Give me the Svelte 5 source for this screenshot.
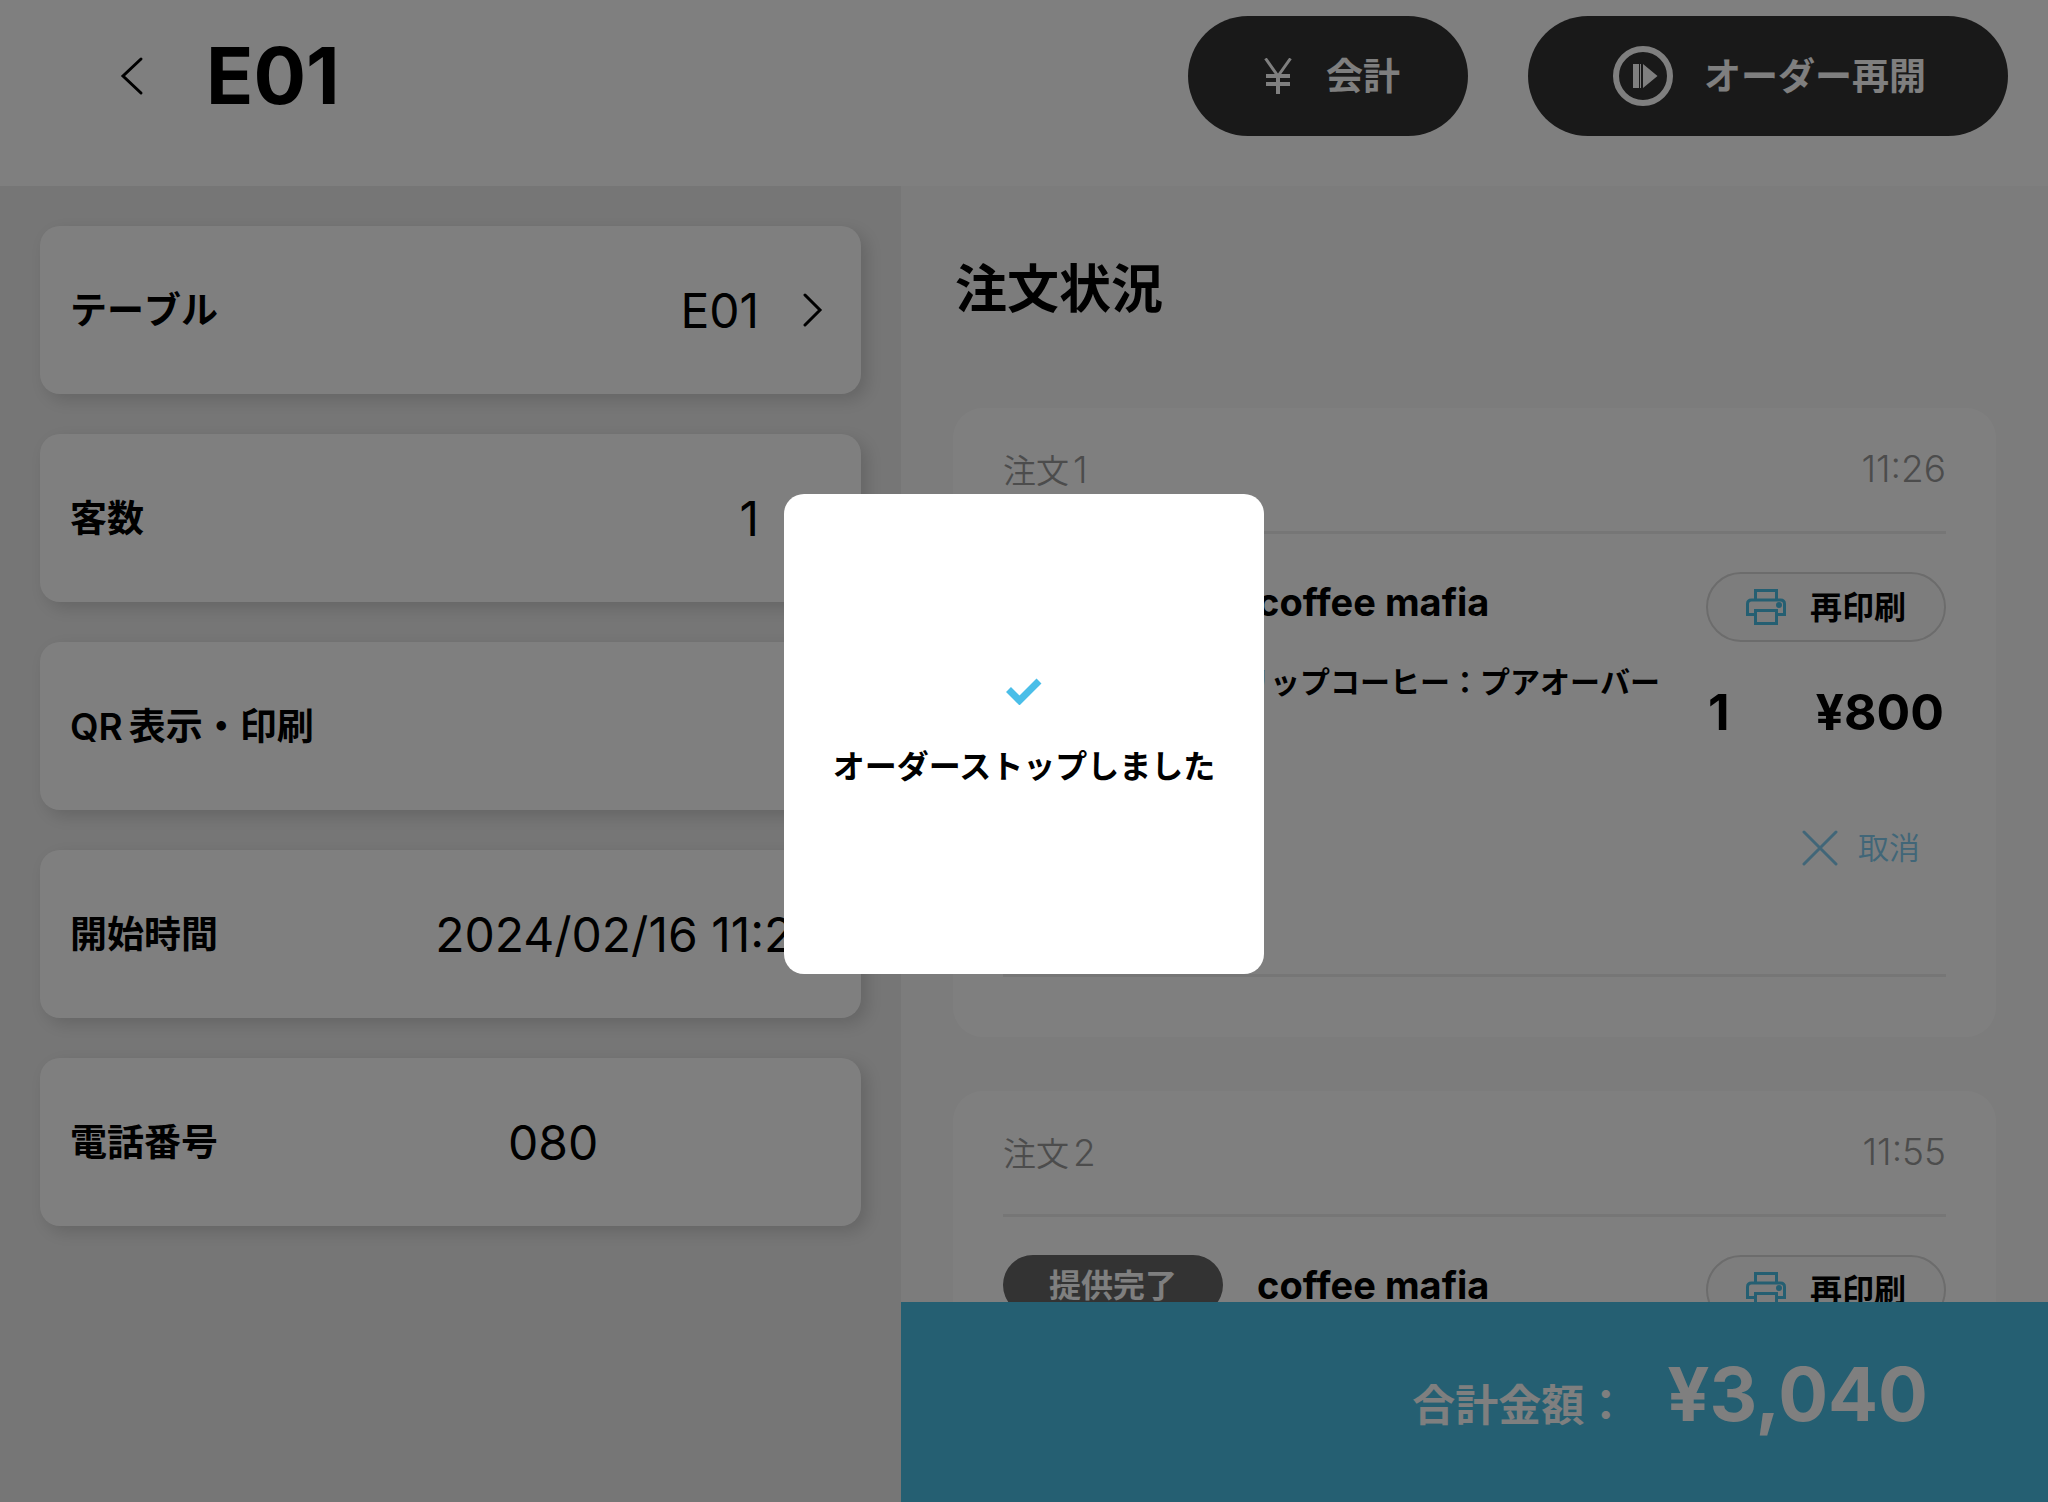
<script>
  const orders = [
    { id: 1, time: '11:26', items: [{ name: 'coffee mafia', option: 'ハンドドリップコーヒー：プアオーバー', qty: 1, price: '¥800' }] },
    { id: 2, time: '11:55', items: [{ name: 'coffee mafia', option: 'ハンドドリップコーヒー：プアオーバー', qty: 1, price: '¥800' }] }
  ];
</script>

{#snippet chevron()}
  <svg class="chevron" viewBox="0 0 20 36" aria-hidden="true"><path d="M2 3l15 15L2 33" /></svg>
{/snippet}

<div class="app">
  <header class="topbar">
    <button class="back" aria-label="戻る">
      <svg viewBox="0 0 24 40" aria-hidden="true"><path d="M21 3L3 20l18 17" /></svg>
    </button>
    <h1>E01</h1>
    <div class="actions">
      <button class="action pay">
        <svg class="yen" viewBox="0 0 28 36" aria-hidden="true"><path class="arms" d="M1.500 0.500L14 18L26.500 0.500" /><path d="M14 16v20M2 18h24M2 26h24" /></svg>
        <span class="text">会計</span>
      </button>
      <button class="action resume">
        <svg class="play" viewBox="0 0 60 60" aria-hidden="true">
          <circle cx="30" cy="30" r="27" />
          <path d="M20 18h6v24h-6zM27 18h1v24h-1zM30 18l14.500 12L30 42z" />
        </svg>
        <span class="text">オーダー再開</span>
      </button>
    </div>
  </header>

  <main>
    <section class="info">
      <button class="row"><span class="label">テーブル</span><span class="value">E01</span>{@render chevron()}</button>
      <button class="row"><span class="label">客数</span><span class="value">1</span>{@render chevron()}</button>
      <button class="row"><span class="label"><span class="latin">QR</span>表示・印刷</span><span class="value"></span>{@render chevron()}</button>
      <div class="row"><span class="label">開始時間</span><time class="value">2024/02/16 11:26</time></div>
      <div class="row">
        <label class="label" for="phone">電話番号</label>
        <input id="phone" type="tel" value="080" />
      </div>
    </section>

    <section class="status">
      <div class="list">
        <h2>注文状況</h2>
        {#each orders as order (order.id)}
          <article class="order">
            <div class="order-head"><span><span class="word">注文</span>{order.id}</span><time>{order.time}</time></div>
            {#each order.items as item}
              <div class="item">
                <div class="main">
                  <div class="title"><span class="badge"><span class="text">提供完了</span></span><h3>{item.name}</h3></div>
                  <p class="option">{item.option}</p>
                </div>
                <div class="side">
                  <button class="reprint">
                    <svg viewBox="0 0 40 36" aria-hidden="true">
                      <path d="M9.500 11V1.500h21V11M9.500 25.500h-8V15q0-4 4-4h29q4 0 4 4v10.500h-8M9.500 21.500h21v13h-21z" />
                      <circle cx="33" cy="16" r="1.500" />
                    </svg>
                    <span class="text">再印刷</span>
                  </button>
                  <div class="amount"><span>{item.qty}</span><span>{item.price}</span></div>
                  <button class="cancel">
                    <svg viewBox="0 0 36 36" aria-hidden="true"><path d="M2 2l32 32M34 2L2 34" /></svg>
                    取消
                  </button>
                </div>
              </div>
            {/each}
          </article>
        {/each}
      </div>
      <footer class="total"><span class="caption">合計金額：</span><strong>¥3,040</strong></footer>
    </section>
  </main>
</div>

<div class="overlay">
  <div class="dialog" role="alertdialog" aria-labelledby="dialog-text">
    <svg viewBox="0 0 36 27" aria-hidden="true"><path d="M2.500 11.500l11 11L33 3" /></svg>
    <p id="dialog-text">オーダーストップしました</p>
  </div>
</div>

<style>
  :global(body) { margin: 0; }
  .app, .overlay {
    font-family: Inter, "Noto Sans CJK JP", sans-serif;
    color: #000;
  }
  .app {
    display: flex;
    flex-direction: column;
    height: 100vh;
    background: #fff;
  }
  .app *, .overlay * { box-sizing: border-box; }
  button, input {
    font: inherit;
    color: inherit;
    border: 0;
    background: none;
    padding: 0;
    margin: 0;
  }
  h1, h2, h3, p { margin: 0; }
  svg { fill: none; stroke: currentColor; flex: none; display: block; }
  .text { padding-bottom: 4px; }

  .topbar {
    display: flex;
    align-items: center;
    flex: none;
    padding: 16px 40px 50px 120px;
  }
  .back svg { width: 24px; height: 40px; stroke-width: 3; stroke-linecap: round; }
  h1 { margin-left: 62px; font-size: 78px; line-height: 80px; font-weight: 700; }
  .actions { display: flex; gap: 60px; margin-left: auto; }
  .action {
    display: flex;
    align-items: center;
    justify-content: center;
    height: 120px;
    border-radius: 60px;
    background: #333;
    color: #fff;
    font-size: 37px;
    font-weight: 700;
  }
  .pay { padding: 0 68px 0 76px; gap: 34px; }
  .resume { padding: 0 82px 0 85px; gap: 31px; }
  .yen { width: 28px; height: 36px; stroke-width: 4; }
  .arms { stroke-width: 3; }
  .play { width: 60px; height: 60px; stroke-width: 6; }
  .play path { fill: currentColor; stroke: none; }

  main { display: flex; flex: 1; min-height: 0; }
  .info {
    display: flex;
    flex-direction: column;
    gap: 40px;
    width: 44%;
    padding: 40px;
    background: #ececec;
  }
  .row {
    display: flex;
    align-items: center;
    height: 168px;
    padding: 0 38px 0 30px;
    border-radius: 20px;
    background: #fff;
    box-shadow: 6px 6px 16px rgba(0, 0, 0, 0.14);
    text-align: left;
  }
  .label { padding-bottom: 4px; font-size: 37px; font-weight: 700; font-kerning: none; }
  .latin { margin-right: 6px; font-weight: 600; }
  .value { flex: 1; text-align: right; font-size: 48px; font-weight: 400; }
  .chevron { width: 20px; height: 36px; margin-left: 44px; stroke-width: 3; stroke-linecap: round; }
  input { flex: 1; min-width: 0; margin-left: 290px; font-size: 48px; }

  .status { display: flex; flex-direction: column; flex: 1; min-width: 0; background: #f8f8f8; }
  .list {
    display: flex;
    flex-direction: column;
    gap: 54px;
    flex: 1;
    min-height: 0;
    overflow: hidden;
    padding: 74px 52px 0;
  }
  h2 { padding: 0 2px; margin-bottom: 34px; font-size: 52px; line-height: 60px; font-weight: 700; }
  .order { flex: none; padding: 0 50px 60px; border-radius: 30px; background: #fff; }
  .order-head {
    display: flex;
    align-items: center;
    justify-content: space-between;
    height: 126px;
    padding-bottom: 2px;
    border-bottom: 3px solid #ececec;
    color: #999;
    font-size: 37px;
    font-weight: 350;
  }
  .word { font-size: 33px; margin-right: 4px; }
  .item {
    display: grid;
    grid-template-columns: 1fr 240px;
    gap: 46px;
    height: 443px;
    padding-top: 38px;
    border-bottom: 3px solid #ececec;
  }
  .main { min-width: 0; }
  .title { display: flex; align-items: center; gap: 34px; height: 60px; }
  .badge {
    display: flex;
    align-items: center;
    justify-content: center;
    width: 220px;
    height: 60px;
    border-radius: 30px;
    background: #666;
    color: #fff;
    font-size: 32px;
    font-weight: 700;
  }
  h3 { font-size: 38px; font-weight: 700; white-space: nowrap; }
  .option { margin-top: 30px; font-size: 30px; line-height: 40px; font-weight: 700; font-kerning: none; text-align: right; white-space: nowrap; }
  .side { display: flex; flex-direction: column; }
  .reprint {
    display: flex;
    align-items: center;
    justify-content: center;
    gap: 24px;
    height: 70px;
    border: 2px solid #d8d8d8;
    border-radius: 35px;
    background: #fbfbfb;
    font-size: 32px;
    font-weight: 700;
  }
  .reprint svg { width: 40px; height: 36px; stroke: #4abee4; stroke-width: 3; }
  .amount {
    display: flex;
    justify-content: space-between;
    margin-top: 40px;
    padding: 0 2px;
    font-size: 50px;
    line-height: 60px;
    font-weight: 700;
  }
  .cancel {
    display: flex;
    align-items: center;
    align-self: flex-end;
    gap: 20px;
    margin: 82px 26px 0 0;
    color: #82cdf0;
    font-size: 31px;
    line-height: 48px;
    font-weight: 350;
  }
  .cancel svg { width: 36px; height: 36px; stroke-width: 3; stroke-linecap: round; }

  .total {
    display: flex;
    align-items: baseline;
    justify-content: flex-end;
    flex: none;
    gap: 40px;
    height: 200px;
    padding: 47px 120px 0 0;
    background: #4abee4;
    color: #fff;
  }
  .caption { font-size: 43px; font-weight: 700; }
  .total strong { font-size: 74px; line-height: 90px; font-weight: 700; }

  .overlay {
    position: fixed;
    inset: 0;
    display: flex;
    align-items: center;
    justify-content: center;
    padding-bottom: 34px;
    background: rgba(0, 0, 0, 0.5);
  }
  .dialog {
    display: flex;
    flex-direction: column;
    align-items: center;
    justify-content: center;
    gap: 38px;
    width: 480px;
    height: 480px;
    border-radius: 20px;
    background: #fff;
  }
  .dialog svg { width: 36px; height: 27px; stroke: #4abee8; stroke-width: 7; }
  .dialog p { font-size: 32px; line-height: 48px; font-weight: 700; white-space: nowrap; }
</style>
